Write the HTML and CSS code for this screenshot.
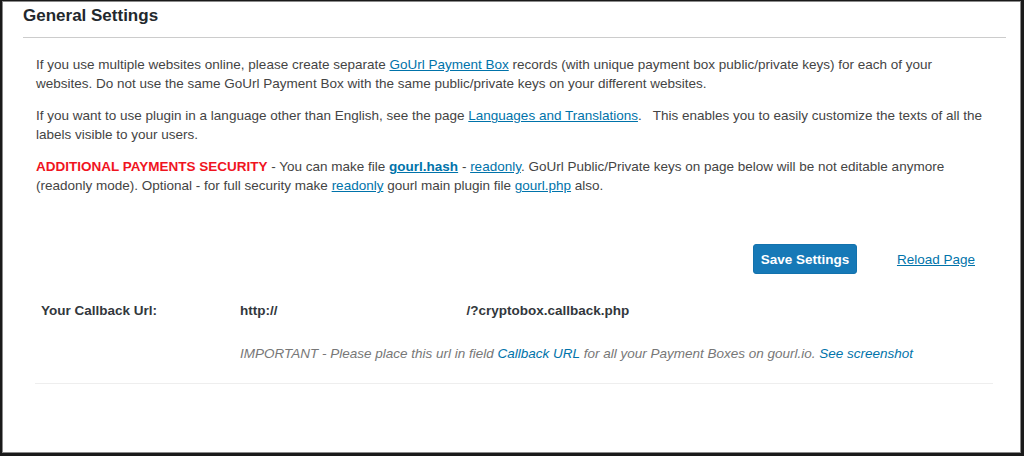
FILE: index.html
```html
<!DOCTYPE html>
<html>
<head>
<meta charset="utf-8">
<link rel="stylesheet" href="styles.css">
</head>
<body>
<div class="frame">
  <div class="page">
    <h2 class="title">General Settings</h2>
    <div class="intro">
      <p>If you use multiple websites online, please create separate <a href="#">GoUrl Payment Box</a> records (with unique payment box public/private keys) for each of your websites. Do not use the same GoUrl Payment Box with the same public/private keys on your different websites.</p>
      <p>If you want to use plugin in a language other than English, see the page <a href="#">Languages and Translations</a>.&nbsp;&nbsp; This enables you to easily customize the texts of all the labels visible to your users.</p>
      <p><span class="warn">ADDITIONAL PAYMENTS SECURITY</span> - You can make file <a href="#" class="strong">gourl.hash</a> - <a href="#">readonly</a>. GoUrl Public/Private keys on page below will be not editable anymore (readonly mode). Optional - for full security make <a href="#">readonly</a> gourl main plugin file <a href="#">gourl.php</a> also.</p>
    </div>
    <div class="actions">
      <button class="btn">Save Settings</button>
      <a href="#" class="reload">Reload Page</a>
    </div>
    <div class="row">
      <div class="label">Your Callback Url:</div>
      <div class="value">
        <div class="url"><span>http://</span><span class="tail">/?cryptobox.callback.php</span></div>
        <div class="note">IMPORTANT - Please place this url in field <a href="#" class="plain">Callback URL</a> for all your Payment Boxes on gourl.io. <a href="#" class="plain">See screenshot</a></div>
      </div>
    </div>
  </div>
</div>
</body>
</html>
```
FILE: styles.css
```css
* { box-sizing: border-box; }
html, body { margin: 0; padding: 0; background: #111; }
body { width: 1024px; height: 456px; overflow: hidden; }
.frame {
  height: 456px;
  border-style: solid;
  border-color: #1a1a1a;
  border-width: 1px 3px 3px 2px;
  background: #fff;
  box-shadow: inset 0 0 0 1px #8a8a8a;
}
.page {
  padding: 0 15px 0 21px;
  font-family: "Liberation Sans", Arial, sans-serif;
  font-size: 13.5px;
  color: #444;
}
.title {
  margin: 0;
  padding: 5px 0 0 0;
  height: 37px;
  font-size: 17px;
  font-weight: bold;
  color: #23282d;
  border-bottom: 1px solid #ccc;
}
.intro { padding: 17px 20px 0 13px; }
.intro p { margin: 0 0 13px 0; line-height: 19px; }
a { color: #0073aa; text-decoration: underline; }
a.plain { text-decoration: none; }
a.strong { font-weight: bold; }
.warn { color: #f0141e; font-weight: bold; }
.actions {
  display: flex;
  align-items: center;
  justify-content: flex-end;
  gap: 40px;
  padding: 36px 31px 0 0;
}
.btn {
  background: #1679b7;
  color: #fff;
  border: 1px solid #1372ad;
  border-radius: 3px;
  height: 30px;
  width: 104px;
  padding: 0;
  font-family: inherit;
  font-size: 13.5px;
  font-weight: bold;
}
.reload { font-size: 13.5px; }
.row {
  display: flex;
  margin: 29px 13px 0 12px;
  padding-bottom: 22px;
  border-bottom: 1px solid #eee;
}
.label {
  width: 205px;
  padding-left: 6px;
  font-weight: bold;
  color: #32373c;
}
.url { font-weight: bold; color: #32373c; display: flex; }
.url .tail { margin-left: 189px; }
.note { margin-top: 28px; font-style: italic; color: #777; }
```
